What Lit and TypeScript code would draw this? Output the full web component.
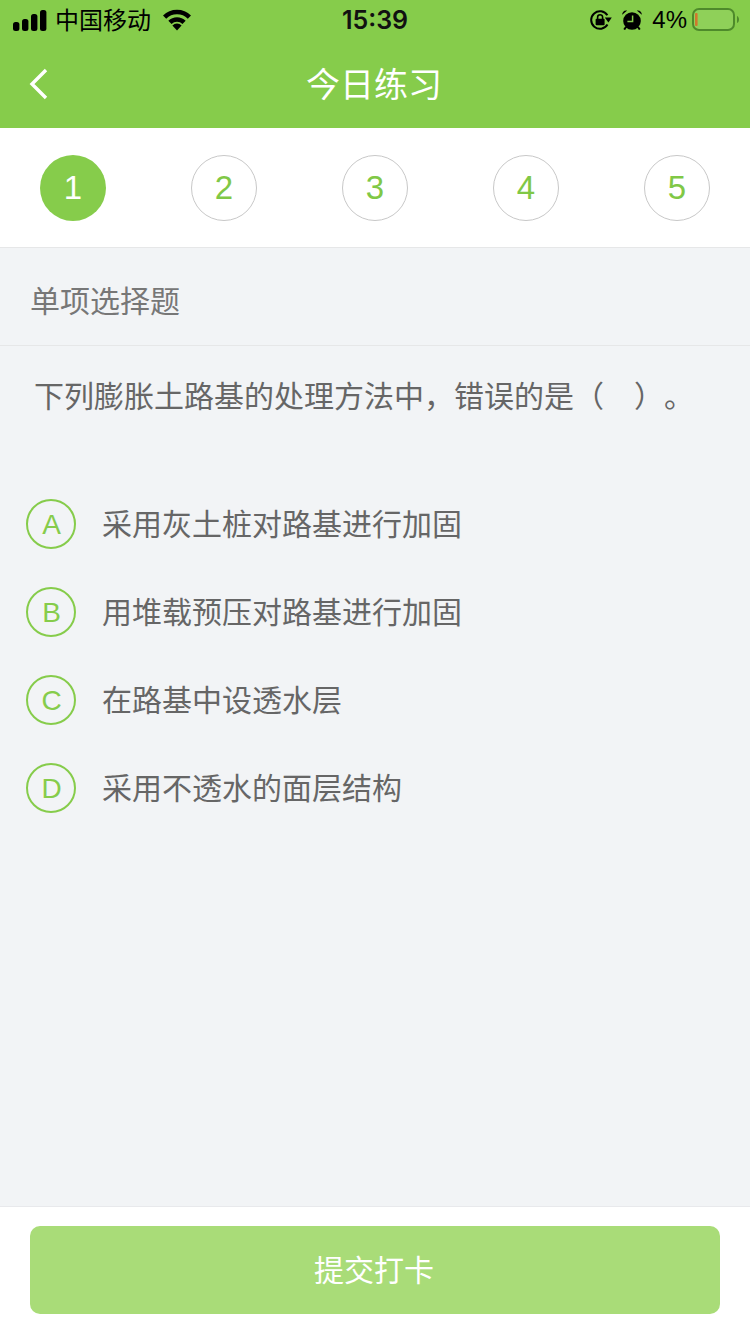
import { LitElement, css, html, svg } from "lit";
import { customElement } from "lit/decorators.js";

const STEPS = [1, 2, 3, 4, 5];

const OPTIONS = [
  { key: "A", text: "采用灰土桩对路基进行加固" },
  { key: "B", text: "用堆载预压对路基进行加固" },
  { key: "C", text: "在路基中设透水层" },
  { key: "D", text: "采用不透水的面层结构" },
];

const signalIcon = svg`<svg class="signal" width="34" height="21" viewBox="0 0 34 21">
  <rect x="0" y="12" width="6.400" height="9" rx="2.500" />
  <rect x="9" y="9" width="6.400" height="12" rx="2.500" />
  <rect x="18" y="4" width="6.400" height="17" rx="2.500" />
  <rect x="27" y="0" width="6.400" height="21" rx="2.500" />
</svg>`;

const wifiIcon = svg`<svg class="wifi" width="30" height="22" viewBox="0 0 30 22">
  <path d="M2.600 8.100A17.500 17.500 0 0 1 27.400 8.100" fill="none" stroke="#000" stroke-width="4.500" />
  <path d="M7.930 13.430A10 10 0 0 1 22.070 13.430" fill="none" stroke="#000" stroke-width="4.500" />
  <path d="M15 21.500L10.400 16.400A6.500 6.500 0 0 1 19.600 16.400z" />
</svg>`;

const rotationIcon = svg`<svg class="rotation" width="22" height="20" viewBox="0 0 22 20">
  <path d="M17.500 14.600A8.800 8.800 0 1 1 17.400 5.300" fill="none" stroke="#000" stroke-width="2" />
  <path d="M14.800 7.400H21.800L18.400 12.400z" />
  <rect x="5.600" y="8.800" width="9" height="6.400" rx="1" />
  <path d="M7.600 9V7.200a2.500 2.500 0 0 1 5 0V9" fill="none" stroke="#000" stroke-width="1.600" />
</svg>`;

const alarmIcon = svg`<svg class="alarm" width="20" height="20" viewBox="0 0 20 20">
  <circle cx="10" cy="11" r="8.800" />
  <path d="M0.200 4.800C0 2 2.400 -0.200 5.200 0.600z" />
  <path d="M19.800 4.800C20 2 17.600 -0.200 14.800 0.600z" />
  <path d="M4 17l-1.800 2.600M16 17l1.800 2.600" stroke="#000" stroke-width="2" />
  <path d="M10.600 5.400V11.600H5.400" fill="none" stroke="#86cc4b" stroke-width="1.500" />
</svg>`;

const batteryIcon = svg`<svg class="battery" width="47" height="24" viewBox="0 0 47 24">
  <rect x="1" y="1" width="41" height="21" rx="6" fill="#8fd059" stroke="#4e8a2b" stroke-width="2" />
  <rect x="3" y="5" width="2.600" height="13" rx="1" fill="#d0782c" />
  <path d="M45 8c1.400.5 2 2 2 3.500s-.6 3-2 3.500z" fill="#4e8a2b" />
</svg>`;

@customElement("app-root")
export class AppRoot extends LitElement {
  protected render() {
    return html`
      <header class="header">
        <div class="status">
          <div class="status-left">
            ${signalIcon}
            <span class="carrier">中国移动</span>
            ${wifiIcon}
          </div>
          <div class="time">15:39</div>
          <div class="status-right">
            ${rotationIcon} ${alarmIcon}
            <span class="percent">4%</span>
            ${batteryIcon}
          </div>
        </div>
        <div class="nav">
          <svg class="back" width="20" height="32" viewBox="0 0 20 32">
            <path d="M17 2L3 16L17 30" fill="none" stroke="#fff" stroke-width="3.400" />
          </svg>
          <div class="title">今日练习</div>
        </div>
      </header>

      <div class="steps">
        ${STEPS.map(
          (step) => html`<div class="step ${step === 1 ? "current" : ""}">${step}</div>`
        )}
      </div>

      <div class="kind">单项选择题</div>
      <div class="question">下列膨胀土路基的处理方法中，错误的是（　）。</div>

      <div class="options">
        ${OPTIONS.map(
          (option) => html`
            <div class="option">
              <div class="letter">${option.key}</div>
              <div class="option-text">${option.text}</div>
            </div>
          `
        )}
      </div>

      <footer class="footer">
        <div class="submit">提交打卡</div>
      </footer>
    `;
  }

  static styles = css`
    :host {
      display: flex;
      flex-direction: column;
      height: 1334px;
      background: #f2f4f6;
      font-family: "Liberation Sans", "Noto Sans CJK SC", sans-serif;
      color: #666;
    }

    .header {
      background: #86cc4b;
      height: 128px;
    }

    .status {
      display: grid;
      grid-template-columns: 1fr auto 1fr;
      align-items: center;
      height: 40px;
      padding: 0 11px;
      color: #000;
    }

    .status svg {
      display: block;
      fill: #000;
    }

    .status-left,
    .status-right {
      display: flex;
      align-items: center;
    }

    .status-right {
      justify-content: flex-end;
    }

    .signal {
      margin-left: 2px;
    }

    .carrier {
      margin: 0 0 4px 8px;
      font-size: 24px;
    }

    .wifi {
      margin-left: 11px;
    }

    .time {
      font-family: Inter, "Liberation Sans", sans-serif;
      font-size: 25px;
      font-weight: 600;
      color: #111;
    }

    .alarm {
      margin-left: 10px;
    }

    .percent {
      margin-left: 10px;
      font-size: 24px;
    }

    .battery {
      margin-left: 5px;
    }

    .nav {
      display: grid;
      grid-template-columns: 1fr auto 1fr;
      align-items: center;
      height: 88px;
      padding-left: 29px;
      padding-right: 31px;
    }

    .back {
      display: block;
    }

    .title {
      padding-bottom: 4px;
      font-size: 34px;
      color: #fff;
    }

    .steps {
      display: flex;
      justify-content: space-between;
      height: 92px;
      padding: 27px 40px 0;
      background: #fff;
      border-bottom: 1px solid #e6e7e8;
    }

    .step {
      display: flex;
      align-items: center;
      justify-content: center;
      width: 66px;
      height: 66px;
      box-sizing: border-box;
      border: 1px solid #c8c8c8;
      border-radius: 50%;
      font-size: 33px;
      color: #80c846;
    }

    .step.current {
      border: none;
      background: #86cc4b;
      color: #fff;
    }

    .kind {
      display: flex;
      align-items: center;
      height: 98px;
      padding: 5px 0 0 30px;
      box-sizing: border-box;
      border-bottom: 1px solid #e6e7e8;
      font-size: 30px;
      color: #777;
    }

    .question {
      margin-top: 31px;
      padding-left: 34px;
      font-size: 30px;
      line-height: 40px;
      text-spacing-trim: space-all;
    }

    .options {
      display: flex;
      flex-direction: column;
      flex: 1;
      margin-top: 63px;
    }

    .option {
      display: flex;
      align-items: center;
      height: 88px;
      padding-left: 26px;
    }

    .letter {
      display: flex;
      align-items: center;
      justify-content: center;
      width: 50px;
      height: 50px;
      padding: 2px 0 0 1px;
      box-sizing: border-box;
      border: 2px solid #86cc4b;
      border-radius: 50%;
      font-size: 28px;
      color: #86cc4b;
    }

    .option-text {
      margin-left: 26px;
      padding-bottom: 4px;
      font-size: 30px;
    }

    .footer {
      height: 128px;
      padding: 19px 30px 0;
      box-sizing: border-box;
      background: #fff;
      border-top: 1px solid #e8e9ec;
    }

    .submit {
      display: flex;
      align-items: center;
      justify-content: center;
      height: 88px;
      padding: 0 2px 4px 0;
      box-sizing: border-box;
      border-radius: 10px;
      background: #a9dc78;
      font-size: 30px;
      color: #fff;
    }
  `;
}
